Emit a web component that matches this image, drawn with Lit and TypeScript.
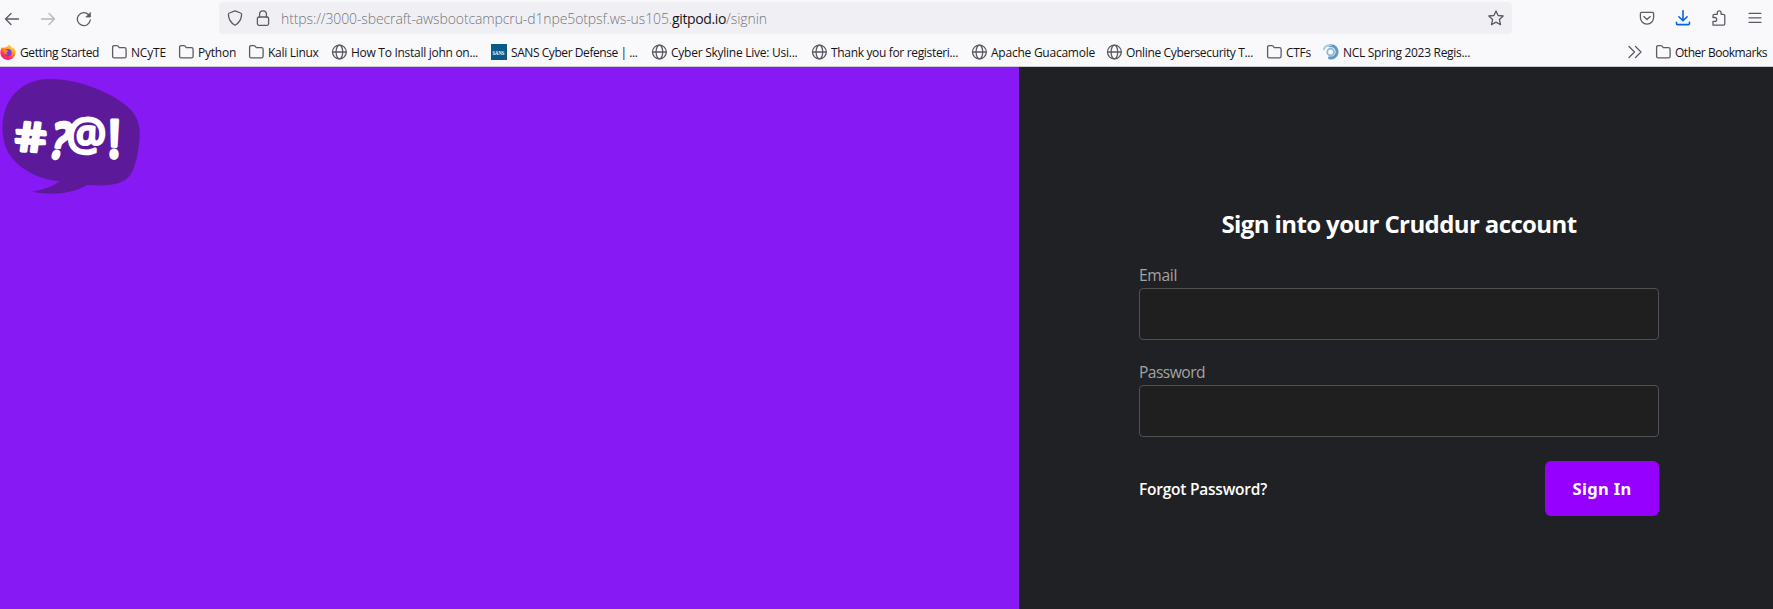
import { LitElement, html, css, svg } from "lit";
import { customElement, property } from "lit/decorators.js";

/** A line of text whose tracking is adjusted so that it fills a given width. */
@customElement("fit-text")
class FitText extends LitElement {
  static styles = css`
    :host { display: block; white-space: nowrap; flex: none; }
    .t { display: inline-block; white-space: pre; }
  `;
  @property() text = "";
  @property({ type: Number }) w = 0;
  firstUpdated() {
    const t = this.renderRoot.querySelector(".t") as HTMLElement;
    const natural = t.getBoundingClientRect().width;
    t.style.letterSpacing = (this.w - natural) / this.text.length + "px";
    this.style.width = this.w + "px";
  }
  render() {
    return html`<span class="t">${this.text}</span>`;
  }
}

const folder = svg`<path d="M1.6 12.2V3.3Q1.6 1.6 3.3 1.6H5.8Q6.6 1.6 7.1 2.2L8.3 3.7H13.4Q15.1 3.7 15.1 5.3V12.2Q15.1 13.8 13.4 13.8H3.2Q1.6 13.8 1.6 12.2Z"/>`;
const globe = svg`<circle cx="8.4" cy="8" r="6.9"/><ellipse cx="8.4" cy="8" rx="3.3" ry="6.9"/><path d="M1.6 8H15.2"/>`;
const firefox = svg`
  <defs>
    <linearGradient id="fx" x1=".8" y1="0" x2=".25" y2="1">
      <stop offset="0" stop-color="#fff04a"/><stop offset=".4" stop-color="#ff9a1f"/>
      <stop offset=".7" stop-color="#ff3b4c"/><stop offset="1" stop-color="#f0159a"/>
    </linearGradient>
  </defs>
  <g stroke="none">
    <path fill="url(#fx)" d="M.3 8.6C.2 6 1.4 4 2.3 2.9L3 4.3C4 3.4 5 3.2 6 3.2C7 2.8 8.3 1.5 9.2.2C10 2 12 3 13 4.4L13.2 3.2C14.8 4.8 15.6 6.7 15.6 8.6C15.4 12.9 12 16 8 16C3.8 16 .4 12.9.3 8.6Z"/>
    <circle cx="8" cy="8.6" r="3.6" fill="#7a3be0"/>
    <path fill="#ff8a1c" d="M3.4 6.2C5 5.4 6.4 6 7.4 6.6C8.5 6.9 8.6 7.4 7 7.9C6 8.6 6.4 9.8 7.9 10.2C6 10.9 4 10 3.4 6.2Z"/>
  </g>`;
const sans = svg`<rect width="16" height="16" fill="#0a5a87" stroke="none"/>
  <text transform="translate(1.5 10.8) scale(.78 1.15)" class="sans">SANS</text>`;
const ncl = svg`<g fill="none">
  <path stroke="#5d9bc9" stroke-width="3" d="M7 1.8C12 1.2 14.5 5 14 8.8C13.4 12.6 10 14.4 6.6 13.8"/>
  <path stroke="#a9c8df" stroke-width="2" d="M.9 5.2C2 2 5 .9 8 1.2"/>
  <circle cx="7.6" cy="8" r="3.4" stroke="#8db8d8" stroke-width="1.8"/></g>`;

const bookmarks: [number, unknown, string, number][] = [
  [0, firefox, "Getting Started", 79],
  [111, folder, "NCyTE", 35],
  [178, folder, "Python", 38],
  [248, folder, "Kali Linux", 50.5],
  [331, globe, "How To Install john on...", 127],
  [491, sans, "SANS Cyber Defense | ...", 126.5],
  [651, globe, "Cyber Skyline Live: Usi...", 126.5],
  [811, globe, "Thank you for registeri...", 127],
  [971, globe, "Apache Guacamole", 104],
  [1106, globe, "Online Cybersecurity T...", 127],
  [1266, folder, "CTFs", 25],
  [1323, ncl, "NCL Spring 2023 Regis...", 127],
  [1655, folder, "Other Bookmarks", 92],
];

@customElement("app-root")
class AppRoot extends LitElement {
  static styles = css`
    :host { display: block; font-family: "Open Sans", "Noto Sans", sans-serif; }
    * { box-sizing: border-box; }
    .window { display: flex; flex-direction: column; height: 609px; width: 1773px; overflow: hidden; background: #f9f9fb; }
    svg { display: block; flex: none; fill: none; stroke: #5b5b66; stroke-width: 1.3; stroke-linecap: round; stroke-linejoin: round; }
    .toolbar { display: grid; grid-template-columns: 219px 1293px 1fr; height: 36px; padding-top: 2px; }
    .nav { display: flex; align-items: center; gap: 20px; height: 33px; padding-left: 4px; }
    .dim { opacity: .42; }
    .address { display: flex; align-items: center; background: #f0f0f4; border-radius: 4px; height: 32px; padding: 0 8px; color: #75757c; font-size: 14px; font-weight: 300; line-height: 20px; }
    .address fit-text { margin-top: 2px; }
    .lock { margin: 0 10px 0 12px; }
    .domain { color: #15141a; font-weight: 400; }
    .star { margin-left: auto; }
    .tools { display: flex; align-items: center; gap: 20px; height: 32px; padding-left: 127px; }
    .down { stroke: #0561e2; stroke-width: 1.6; }
    .bookmarks { display: flex; height: 30px; align-items: center; font-size: 12px; line-height: 16px; color: #15141a; }
    .bookmark { display: flex; align-items: center; gap: 4px; height: 18px; margin-top: 2px; }
    .bookmark fit-text { margin-top: 1px; }
    .overflow { margin: 2px 0 0 157px; }
    .sans { fill: #fff; stroke: none; font: 700 6px "Liberation Serif", serif; }
    .page { display: grid; grid-template-columns: 1019px 1fr; flex: 1; border-top: 1px solid #ccc; }
    .hero { background: #8719f5; }
    .logo { stroke: none; }
    .swear { fill: #fff; stroke: #fff; stroke-width: 7; font: 600 100px "Open Sans", sans-serif; }
    .at { font-weight: 400; }
    .panel { background: #202124; padding: 141px 0 0 120px; }
    .form { width: 520px; display: flex; flex-direction: column; }
    .title { align-self: center; margin: 0; font-size: 24px; line-height: 32px; font-weight: 700; color: #fff; }
    .label { font-size: 15.6px; line-height: 22px; color: #a3a3a3; }
    .email { margin-top: 24px; }
    .password { margin-top: 21px; }
    .field { height: 52px; width: 520px; padding: 0 16px; margin: 2px 0 0; border: 1px solid #505153; border-radius: 4px; background: #1f1f1f; color: #fff; outline: 0; }
    .actions { display: flex; justify-content: space-between; align-items: center; margin-top: 24px; }
    .forgot { font-size: 15.5px; line-height: 22px; font-weight: 600; color: #fff; padding-top: 1px; }
    .submit { display: flex; align-items: center; justify-content: center; width: 114px; height: 55px; padding: 0; border: 0; border-radius: 6px; background: #9500ff; color: #fff; font: 700 16.5px/22px "Noto Sans", sans-serif; }
  `;

  icon(body: unknown, cls = "") {
    return html`<svg class=${cls} width="16" height="16" viewBox="0 0 16 16">${body}</svg>`;
  }

  render() {
    return html`<div class="window">
      <div class="toolbar">
        <div class="nav">
          ${this.icon(svg`<path d="M14.5 8H1.5M7 2.5L1.5 8L7 13.5"/>`)}
          ${this.icon(svg`<path d="M1.5 8H14.5M9 2.5L14.5 8L9 13.5"/>`, "dim")}
          ${this.icon(svg`<path d="M14.3 9A6.5 6.5 0 1 1 12.6 3.7"/><path d="M14.4 1.8V6H10.2Z" fill="#5b5b66" stroke-width=".8"/>`)}
        </div>
        <div class="address">
          ${this.icon(svg`<path d="M8 .8L13.6 3Q14.7 3.4 14.6 4.6C14.4 9 12.8 12.6 8 15.2C3.2 12.6 1.6 9 1.4 4.6Q1.3 3.4 2.4 3Z"/>`)}
          ${this.icon(svg`<rect x="2.4" y="7" width="11.2" height="8.3" rx="1.5"/><path d="M4.6 7V4.2A3.4 3.4 0 0 1 11.4 4.2V7"/>`, "lock")}
          <fit-text text="https://3000-sbecraft-awsbootcampcru-d1npe5otpsf.ws-us105." w="391"></fit-text>
          <fit-text class="domain" text="gitpod.io" w="54"></fit-text>
          <fit-text text="/signin" w="41"></fit-text>
          ${this.icon(svg`<path d="M8 .9L10.1 5.5L15.2 6L11.4 9.5L12.5 14.7L8 12.1L3.5 14.7L4.6 9.5L.8 6L5.9 5.5Z"/>`, "star")}
        </div>
        <div class="tools">
          ${this.icon(svg`<path d="M2.6 2.3H13.4Q14.6 2.3 14.6 3.5V7.5A6.6 6.6 0 0 1 1.4 7.5V3.5Q1.4 2.3 2.6 2.3ZM4.8 6.6L8 9.5L11.2 6.6"/>`)}
          ${this.icon(svg`<path d="M8 .8V10.6M3.9 6.8L8 10.8L12.1 6.8M1.5 12.2V13.2Q1.5 14.6 2.9 14.6H13.1Q14.5 14.6 14.5 13.2V12.2"/>`, "down")}
          ${this.icon(svg`<path d="M2 15V11.3H3.8A1.9 1.9 0 0 0 3.8 7.5H2V5.6Q2 4.3 3.3 4.3H6.3V2.7A1.9 1.9 0 0 1 10.1 2.7V4.3H12.4Q13.8 4.3 13.8 5.7V13.6Q13.8 15.2 12.4 15.2H2.2Z"/>`)}
          ${this.icon(svg`<path d="M2 3.3H14M2 7.8H14M2 12.3H14"/>`)}
        </div>
      </div>
      <div class="bookmarks">
        ${bookmarks.map(([x, icon, text, w], i) => {
          const prev = bookmarks[i - 1];
          const last = i === bookmarks.length - 1;
          const gap = last ? 12 : prev ? x - (prev[0] + 20 + prev[3]) : 0;
          return html`
            ${last ? this.icon(svg`<path d="M2 2.5L7.5 8L2 13.5M8.5 2.5L14 8L8.5 13.5"/>`, "overflow") : ""}
            <div class="bookmark" style="margin-left:${gap}px">${this.icon(icon)}<fit-text text=${text} w=${w}></fit-text></div>`;
        })}
      </div>
      <div class="page">
        <div class="hero">
          <svg class="logo" width="160" height="140" viewBox="0 3 480 420">
            <path fill="#5c1a9b" d="M150 39C250 40 360 90 400 140C418 165 420 190 419 215C415 260 407 300 394 322C375 355 330 362 262 357C215 385 150 388 96 377C130 372 160 360 179 346C110 340 50 305 22 255C5 220 2 165 18 125C40 70 90 38 150 39Z"/>
            <g class="swear">
              <text transform="translate(48 254) rotate(3) skewX(8) scale(1.48 1.22)">#</text>
              <text transform="translate(143 273) rotate(6) skewX(-8) scale(1.18 1.5)">?</text>
              <text class="at" transform="translate(200 250) scale(1.32 1.3)">@</text>
              <text transform="translate(324 274) rotate(1) scale(1.3 1.56)">!</text>
            </g>
          </svg>
        </div>
        <div class="panel">
          <div class="form">
            <h1 class="title"><fit-text text="Sign into your Cruddur account" w="355"></fit-text></h1>
            <div class="label email"><fit-text text="Email" w="38"></fit-text></div>
            <input class="field" type="text">
            <div class="label password"><fit-text text="Password" w="66"></fit-text></div>
            <input class="field" type="password">
            <div class="actions">
              <fit-text class="forgot" text="Forgot Password?" w="128"></fit-text>
              <button class="submit"><fit-text text="Sign In" w="59"></fit-text></button>
            </div>
          </div>
        </div>
      </div>
    </div>`;
  }
}
